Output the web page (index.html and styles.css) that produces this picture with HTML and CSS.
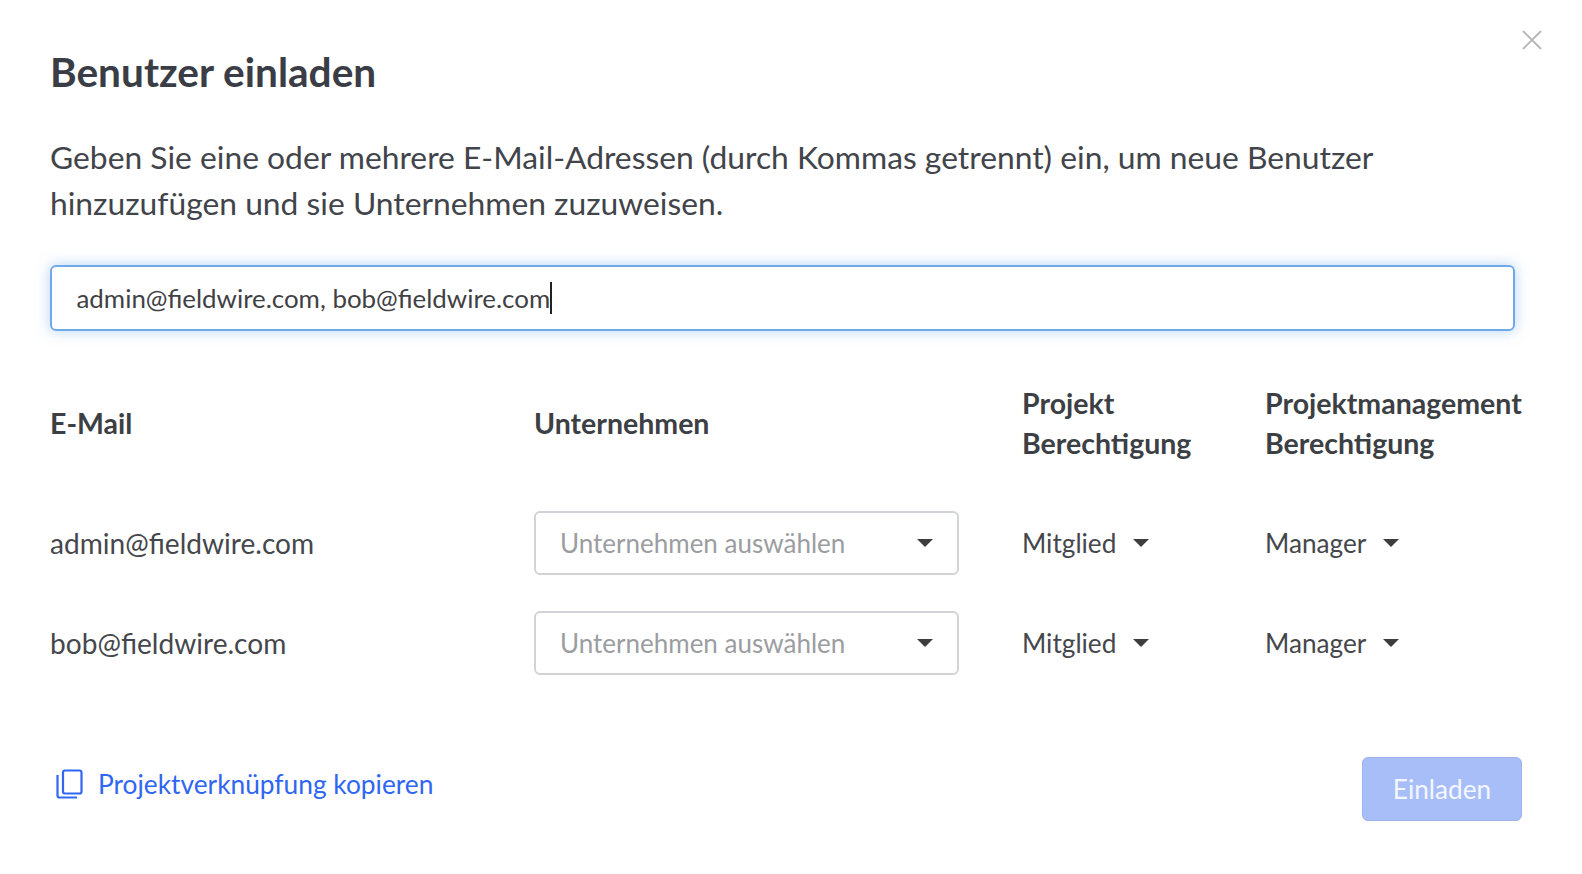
FILE: index.html
```html
<!DOCTYPE html>
<html lang="de">
<head>
<meta charset="utf-8">
<title>Benutzer einladen</title>
<link rel="stylesheet" href="styles.css">
</head>
<body>
<main class="modal">
  <button class="close" aria-label="Schließen">
    <svg width="20" height="20" viewBox="0 0 20 20"><path d="M1 1L19 19M19 1L1 19" stroke="#b5b5b5" stroke-width="1.8" fill="none"/></svg>
  </button>
  <h1 class="title">Benutzer einladen</h1>
  <p class="intro">Geben Sie eine oder mehrere E-Mail-Adressen (durch Kommas getrennt) ein, um neue Benutzer hinzuzufügen und sie Unternehmen zuzuweisen.</p>
  <div class="email-input"><span>admin@fieldwire.com, bob@fieldwire.com</span><i class="caret"></i></div>
  <div class="table">
    <div class="head">E-Mail</div>
    <div class="head">Unternehmen</div>
    <div class="head">Projekt<br>Berechtigung</div>
    <div class="head">Projektmanagement<br>Berechtigung</div>

    <div class="cell">admin@fieldwire.com</div>
    <div class="select"><span>Unternehmen auswählen</span><i class="arrow"></i></div>
    <div class="drop"><span>Mitglied</span><i class="arrow"></i></div>
    <div class="drop"><span>Manager</span><i class="arrow"></i></div>

    <div class="cell">bob@fieldwire.com</div>
    <div class="select"><span>Unternehmen auswählen</span><i class="arrow"></i></div>
    <div class="drop"><span>Mitglied</span><i class="arrow"></i></div>
    <div class="drop"><span>Manager</span><i class="arrow"></i></div>
  </div>
  <footer class="footer">
    <a class="copy" href="#">
      <svg width="27" height="30" viewBox="0 0 27 30" fill="none" stroke="#2f66f2" stroke-width="2.2"><rect x="7" y="1.5" width="18.5" height="23" rx="2"/><path d="M1.5 6V26.5a2 2 0 0 0 2 2H21"/></svg>
      <span>Projektverknüpfung kopieren</span>
    </a>
    <button class="invite">Einladen</button>
  </footer>
</main>
</body>
</html>
```
FILE: styles.css
```css
* { box-sizing: border-box; }
html, body { margin: 0; height: 100%; background: #fff; }
body { font-family: Lato, "Open Sans", sans-serif; color: #3d4046; overflow: hidden; }
.modal { position: relative; height: 874px; padding: 47px 60px 0 50px; }
.close { position: absolute; top: 30px; right: 40px; width: 20px; height: 20px; padding: 0; border: 0; background: none; display: block; }
.close svg { display: block; }
.title { margin: 0; font-size: 40.6px; line-height: 50px; font-weight: 700; color: #3a3d45; }
.intro { margin: 37px 0 0; font-size: 31.8px; line-height: 46px; max-width: 1400px; color: #41444a; }
.email-input { margin-top: 39px; margin-right: 7px; height: 66px; display: flex; align-items: center; padding-left: 24.5px; border: 2px solid #70a9ea; border-radius: 6px; box-shadow: 0 0 14px rgba(112,169,234,.5); font-size: 25.9px; color: #3f4145; }
.caret { width: 2px; height: 32px; background: #222; }
.table { margin-top: 52px; display: grid; grid-template-columns: 484px 488px 243px 260px; grid-template-rows: 92px 64px 64px; row-gap: 36px; align-items: center; }
.head { margin-bottom: 12px; font-size: 28.5px; line-height: 40px; font-weight: 700; color: #3c3f44; white-space: nowrap; }
.cell { font-size: 28.1px; color: #45474c; white-space: nowrap; }
.drop { display: flex; align-items: center; gap: 17px; font-size: 26.2px; color: #45474c; white-space: nowrap; }
.select { width: 425px; height: 64px; display: flex; align-items: center; justify-content: space-between; padding: 0 24px; border: 2px solid #d2d3d6; border-radius: 6px; font-size: 26px; color: #9b9da1; }
.arrow { width: 0; height: 0; border-left: 8.5px solid transparent; border-right: 8.5px solid transparent; border-top: 8.5px solid #3d3d3f; }
.footer { margin-top: 82px; display: flex; justify-content: space-between; align-items: flex-start; }
.copy { display: flex; align-items: center; gap: 15px; padding-left: 6px; margin-top: 11px; font-size: 26.3px; color: #2f66f2; text-decoration: none; }
.copy svg { display: block; }
.invite { width: 160px; height: 64px; padding: 0; border: 1px solid #9fb3ea; border-radius: 6px; background: #a8bef9; color: #f4f7ff; font: 400 26.2px Lato, sans-serif; }
```
